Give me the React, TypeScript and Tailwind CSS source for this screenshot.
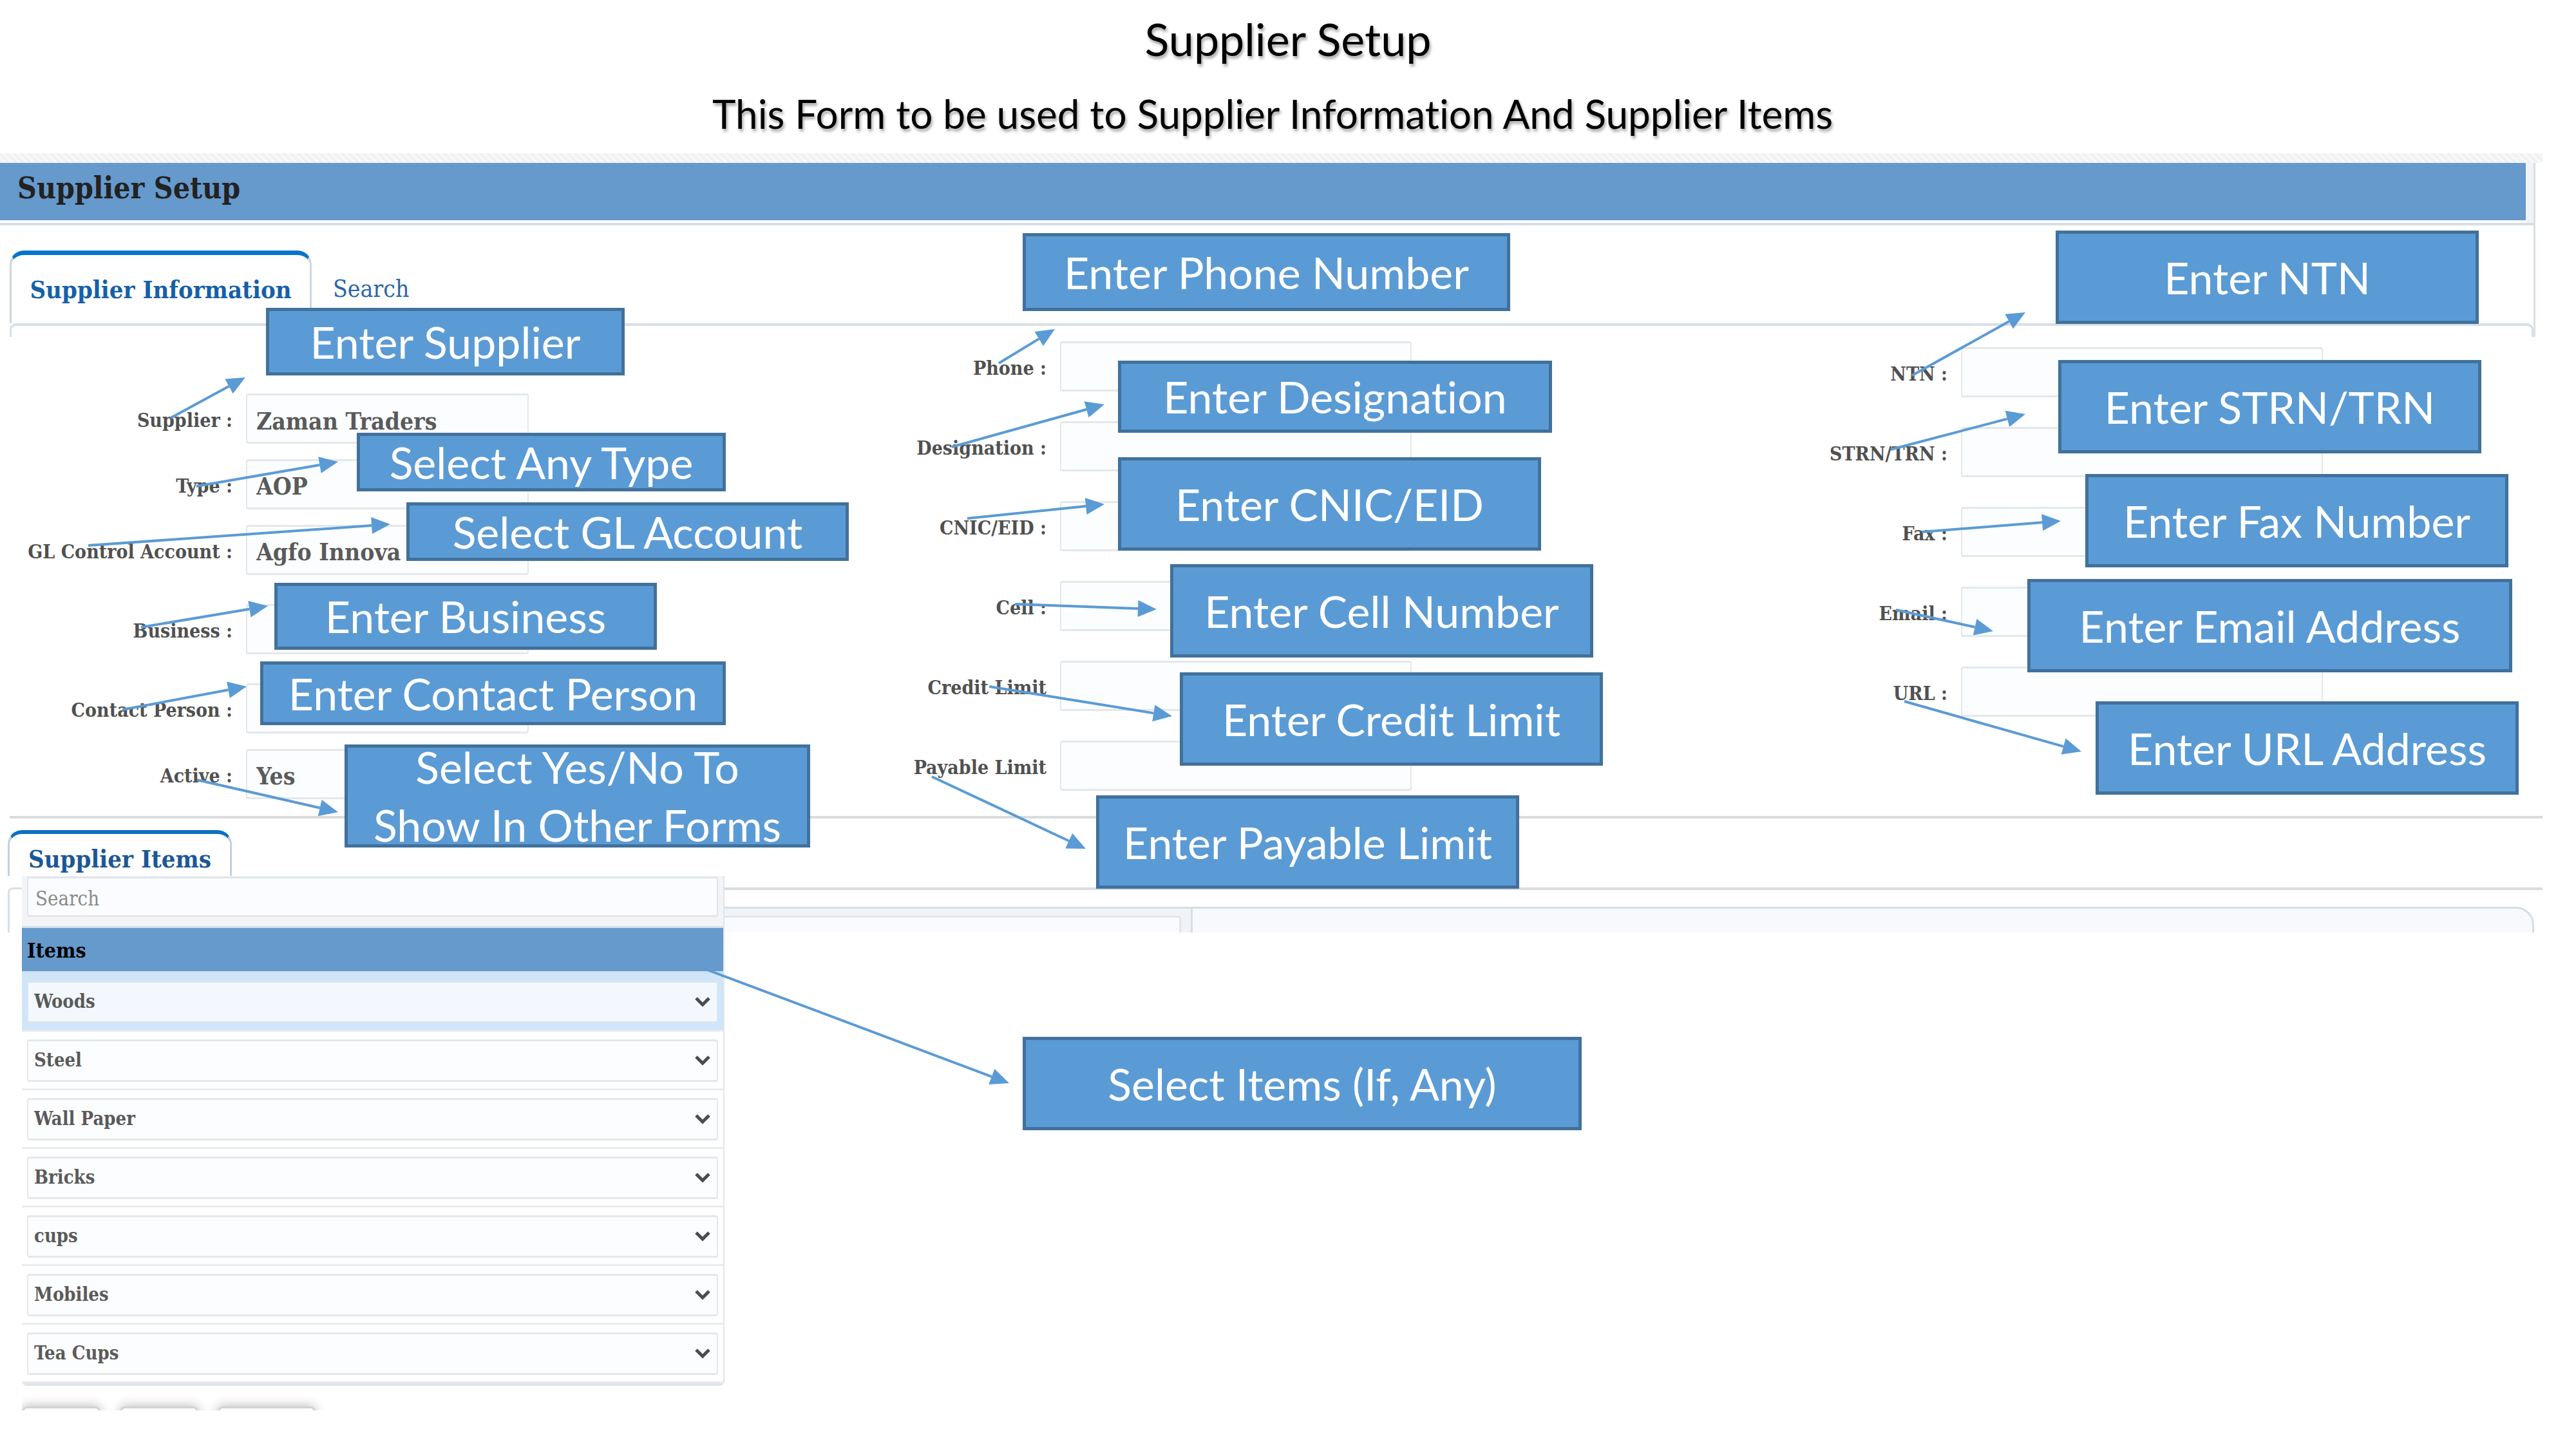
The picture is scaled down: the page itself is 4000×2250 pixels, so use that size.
import type { ReactNode } from "react";

type Point = [number, number];

/** Connector line that ends in a filled triangular head. */
function Arrow({ from, to }: { from: Point; to: Point }) {
  const dx = to[0] - from[0];
  const dy = to[1] - from[1];
  const length = Math.hypot(dx, dy);
  const ux = dx / length;
  const uy = dy / length;
  const baseX = to[0] - ux * 29;
  const baseY = to[1] - uy * 29;
  const head = [
    `${to[0]},${to[1]}`,
    `${baseX - uy * 13},${baseY + ux * 13}`,
    `${baseX + uy * 13},${baseY - ux * 13}`,
  ].join(" ");
  return (
    <svg className="pointer-events-none absolute top-0 left-0 size-px overflow-visible" aria-hidden="true">
      <line x1={from[0]} y1={from[1]} x2={baseX} y2={baseY} stroke="#5b9bd5" strokeWidth={4} />
      <polygon points={head} fill="#5b9bd5" />
    </svg>
  );
}

type Hint = { text: ReactNode; box: string; from: Point; to: Point };

/** Zero-size anchor that carries a callout box and its arrow over the form. */
function Callout({ hint }: { hint: Hint }) {
  return (
    <span className="relative size-0 self-start">
      <span
        className={`absolute flex items-center justify-center border-[5px] border-[#41719c] bg-[#5b9bd5] text-center font-[Lato,sans-serif] text-[68px] leading-[90px] font-normal whitespace-nowrap text-white [font-variant-ligatures:none] ${hint.box}`}
      >
        {hint.text}
      </span>
      <Arrow from={hint.from} to={hint.to} />
    </span>
  );
}

type FieldData = {
  id: string;
  label: string;
  kind?: "select";
  value?: string;
  gap?: string;
  hint: Hint;
};

const supplierFields: FieldData[] = [
  {
    id: "supplier",
    label: "Supplier :",
    value: "Zaman Traders",
    hint: { text: "Enter Supplier", box: "left-[31px] top-[-133px] w-[557px] h-[105px]", from: [-117, 38], to: [-1, -25] },
  },
  {
    id: "type",
    label: "Type :",
    kind: "select",
    value: "AOP",
    gap: "mt-6",
    hint: { text: "Select Any Type", box: "left-[172px] top-[-41px] w-[573px] h-[91px]", from: [-77, 42], to: [143, 4] },
  },
  {
    id: "gl",
    label: "GL Control Account :",
    kind: "select",
    value: "Agfo Innova",
    gap: "mt-6",
    hint: { text: "Select GL Account", box: "left-[249px] top-[-35px] w-[687px] h-[91px]", from: [-245, 32], to: [224, -1] },
  },
  {
    id: "business",
    label: "Business :",
    gap: "mt-[45px]",
    hint: { text: "Enter Business", box: "left-[44px] top-[-33px] w-[594px] h-[104px]", from: [-163, 36], to: [34, 3] },
  },
  {
    id: "contact",
    label: "Contact Person :",
    gap: "mt-[45px]",
    hint: { text: "Enter Contact Person", box: "left-[22px] top-[-34px] w-[723px] h-[99px]", from: [-192, 41], to: [1, 5] },
  },
  {
    id: "active",
    label: "Active :",
    kind: "select",
    value: "Yes",
    gap: "mt-6",
    hint: {
      text: (
        <>
          Select Yes/No To
          <br />
          Show In Other Forms
        </>
      ),
      box: "left-[153px] top-[-7px] w-[723px] h-[160px]",
      from: [-76, 48],
      to: [143, 98],
    },
  },
];

const contactFields: FieldData[] = [
  {
    id: "phone",
    label: "Phone :",
    hint: { text: "Enter Phone Number", box: "left-[-58px] top-[-168px] w-[757px] h-[121px]", from: [-95, 34], to: [-8, -19] },
  },
  {
    id: "designation",
    label: "Designation :",
    hint: { text: "Enter Designation", box: "left-[90px] top-[-94px] w-[674px] h-[112px]", from: [-168, 40], to: [69, -26] },
  },
  {
    id: "cnic",
    label: "CNIC/EID :",
    hint: { text: "Enter CNIC/EID", box: "left-[90px] top-[-68px] w-[657px] h-[145px]", from: [-144, 27], to: [69, 5] },
  },
  {
    id: "cell",
    label: "Cell :",
    hint: { text: "Enter Cell Number", box: "left-[171px] top-[-26px] w-[657px] h-[145px]", from: [-70, 36], to: [150, 44] },
  },
  {
    id: "credit",
    label: "Credit Limit",
    hint: { text: "Enter Credit Limit", box: "left-[186px] top-[18px] w-[657px] h-[145px]", from: [-110, 40], to: [174, 86] },
  },
  {
    id: "payable",
    label: "Payable Limit",
    hint: { text: "Enter Payable Limit", box: "left-[56px] top-[85px] w-[657px] h-[145px]", from: [-199, 56], to: [40, 168] },
  },
];

const taxFields: FieldData[] = [
  {
    id: "ntn",
    label: "NTN :",
    hint: { text: "Enter NTN", box: "left-[147px] top-[-181px] w-[657px] h-[145px]", from: [-76, 44], to: [100, -54] },
  },
  {
    id: "strn",
    label: "STRN/TRN :",
    hint: { text: "Enter STRN/TRN", box: "left-[151px] top-[-104px] w-[657px] h-[145px]", from: [-109, 35], to: [100, -20] },
  },
  {
    id: "fax",
    label: "Fax :",
    hint: { text: "Enter Fax Number", box: "left-[193px] top-[-51px] w-[657px] h-[145px]", from: [-61, 39], to: [155, 22] },
  },
  {
    id: "email",
    label: "Email :",
    hint: { text: "Enter Email Address", box: "left-[103px] top-[-12px] w-[753px] h-[145px]", from: [-101, 36], to: [50, 69] },
  },
  {
    id: "url",
    label: "URL :",
    hint: { text: "Enter URL Address", box: "left-[209px] top-[54px] w-[657px] h-[145px]", from: [-88, 54], to: [187, 132] },
  },
];

const itemsHint: Hint = {
  text: "Select Items (If, Any)",
  box: "left-[465px] top-[102px] w-[868px] h-[145px]",
  from: [-30, -4],
  to: [444, 174],
};

const items = ["Woods", "Steel", "Wall Paper", "Bricks", "cups", "Mobiles", "Tea Cups"];

const controlClass =
  "h-[78px] appearance-none rounded-sm border-x-2 border-y-[3px] border-[#e4e8eb] bg-[#fbfdff] px-[14px] pt-2 text-[37px] font-bold text-[#5a5a5a] outline-none";

function Field({ field, width }: { field: FieldData; width: string }) {
  return (
    <div className={`flex items-center ${field.gap ?? ""}`}>
      <label htmlFor={field.id} className="w-[382px] shrink-0 pt-1 pr-[21px] text-right text-[30px] font-bold whitespace-nowrap text-[#505050]">
        {field.label}
      </label>
      <Callout hint={field.hint} />
      {field.kind === "select" ? (
        <select id={field.id} className={`${controlClass} ${width}`} defaultValue={field.value}>
          <option>{field.value}</option>
        </select>
      ) : (
        <input id={field.id} type="text" className={`${controlClass} ${width}`} defaultValue={field.value} />
      )}
    </div>
  );
}

function ItemRow({ name, active }: { name: string; active: boolean }) {
  return (
    <li className={`border-b-[3px] border-[#e9ecef] px-2 pt-3 pb-[10px] ${active ? "bg-[#cfe6fa]" : "bg-white"}`}>
      <div className="grid items-center">
        <select
          aria-label={name}
          className={`col-start-1 row-start-1 h-[66px] w-full appearance-none rounded-sm border-x-2 border-y-[3px] px-[9px] text-[29px] font-bold text-[#5a5a5a] outline-none ${
            active ? "border-[#dae5ef] bg-[#f2f8fd]" : "border-[#e4e8eb] bg-[#fcfdff]"
          }`}
        >
          <option>{name}</option>
        </select>
        <svg
          viewBox="0 0 24 16"
          className="pointer-events-none col-start-1 row-start-1 mr-3 h-4 w-6 justify-self-end"
          fill="none"
          stroke="#4a4d50"
          strokeWidth={5}
          aria-hidden="true"
        >
          <path d="M2 2 L12 12 L22 2" />
        </svg>
      </div>
    </li>
  );
}

export default function App() {
  return (
    <main className="min-h-screen w-full overflow-hidden bg-white font-['DejaVu_Serif_Condensed','DejaVu_Serif',serif]">
      <header className="flex h-[238px] flex-col items-center pt-5 font-[Lato,sans-serif] text-black [font-variant-ligatures:none] [text-shadow:2px_4px_4px_rgba(0,0,0,0.35)]">
        <h1 className="text-[70px] leading-20">Supplier Setup</h1>
        <p className="mt-9 pr-12 text-[62px] leading-20">This Form to be used to Supplier Information And Supplier Items</p>
      </header>

      <div className="mr-[52px] h-[15px] bg-[#f5f5f5] bg-[repeating-linear-gradient(45deg,#f1f1f1_0_4px,#f8f8f8_4px_8px)]" />

      <div className="mr-[63px] border-r-[3px] border-[#d9dfe5]">
        <div className="border-b-4 border-[#d5dfe3] bg-[#f1f2f5] pr-3">
          <div className="border-b-4 border-white bg-[#6699cc]">
            <h2 className="pb-[11px] pl-[27px] text-[46px] leading-[78px] font-bold text-[#222]">Supplier Setup</h2>
          </div>
        </div>

        <nav className="flex h-[152px] items-end pl-[15px]">
          <button
            type="button"
            className="h-[113px] w-[469px] rounded-t-[22px] border-x-[3px] border-t-[7px] border-x-[#cdd7df] border-t-[#0474cf] bg-white text-[38px] font-bold whitespace-nowrap text-[#1660a8]"
          >
            Supplier Information
          </button>
          <button type="button" className="ml-[33px] h-[113px] pt-[7px] text-[37px] text-[#2a66a8]">
            Search
          </button>
        </nav>
        <div className="ml-[15px] h-[21px] rounded-t-[10px] border-x-[3px] border-t-4 border-[#d8dfe6]" />
      </div>

      <form>
        <section className="mr-[52px] ml-[15px] border-b-4 border-[#d8dcdf]">
          <div className="-mr-[52px] -ml-[15px] grid grid-cols-[1264fr_1399fr_1337fr] pb-[26px]">
            <div className="pt-[88px]">
              {supplierFields.map((field) => (
                <Field key={field.id} field={field} width="w-[439px]" />
              ))}
            </div>
            <div className="flex flex-col gap-[46px] pt-[7px]">
              {contactFields.map((field) => (
                <Field key={field.id} field={field} width="w-[546px]" />
              ))}
            </div>
            <div className="flex flex-col gap-[46px] pt-4">
              {taxFields.map((field) => (
                <Field key={field.id} field={field} width="w-[562px]" />
              ))}
            </div>
          </div>
        </section>

        <section className="mt-[18px]">
          <button
            type="button"
            className="ml-3 block h-[71px] w-[348px] rounded-t-[22px] border-x-[3px] border-t-[6px] border-x-[#c5d0da] border-t-[#0a70c8] bg-white pt-3 text-[38px] leading-[48px] font-bold whitespace-nowrap text-[#1c5796]"
          >
            Supplier Items
          </button>
          <div className="flex items-start">
            <div className="mt-[18px] ml-3 h-[70px] w-[22px] rounded-tl-lg border-t-[3px] border-l-[3px] border-[#d8dfe6]" />
            <div className="w-[1091px] shrink-0 rounded-b-lg border-r-2 border-b-4 border-[#e1e5ea]">
              <div className="h-[81px] border-b-[3px] border-[#d3e0ec] bg-[#f3f4f8] px-2 pt-px">
                <input
                  type="text"
                  aria-label="Search items"
                  placeholder="Search"
                  className="h-[63px] w-full rounded-sm border-x-2 border-y-[3px] border-[#e2e6ea] bg-[#fafcff] px-[11px] pt-1 text-[31px] outline-none placeholder:text-[#8a8a8a]"
                />
              </div>
              <div className="flex justify-between border-b-[3px] border-[#d0dfee] bg-[#6699cc]">
                <h3 className="h-[67px] pl-2 text-[32px] leading-[70px] font-bold text-black">Items</h3>
                <div className="self-end">
                  <Callout hint={itemsHint} />
                </div>
              </div>
              <ul>
                {items.map((name, index) => (
                  <ItemRow key={name} name={name} active={index === 0} />
                ))}
              </ul>
            </div>
            <div className="mt-[18px] mr-[52px] flex-1 border-t-4 border-[#d8dcdf] pt-[26px]">
              <div className="mr-[13px] flex h-10 rounded-tr-[28px] border-t-[3px] border-r-[3px] border-[#d5dde5] bg-[#f8f9fd]">
                <div className="w-[727px] border-r-[3px] border-[#d5dde5] bg-[#f1f3f7] pt-[11px] pr-[15px]">
                  <div className="h-[26px] rounded-tr-sm border-t-[3px] border-r-[3px] border-[#e2e6ea] bg-[#fafbfe]" />
                </div>
              </div>
            </div>
          </div>
        </section>

        <div className="ml-[34px] flex h-[38px] gap-[30px] overflow-hidden pt-8">
          <button type="button" aria-label="Save" className="h-20 w-[122px] shrink-0 rounded-lg border-[3px] border-[#cfd5d9] bg-white shadow-[0_0_18px_rgba(0,0,0,0.3)]" />
          <button type="button" aria-label="Clear" className="h-20 w-[122px] shrink-0 rounded-lg border-[3px] border-[#cfd5d9] bg-white shadow-[0_0_18px_rgba(0,0,0,0.3)]" />
          <button type="button" aria-label="Refresh" className="h-20 w-[152px] shrink-0 rounded-lg border-[3px] border-[#cfd5d9] bg-white shadow-[0_0_18px_rgba(0,0,0,0.3)]" />
        </div>
      </form>
    </main>
  );
}
